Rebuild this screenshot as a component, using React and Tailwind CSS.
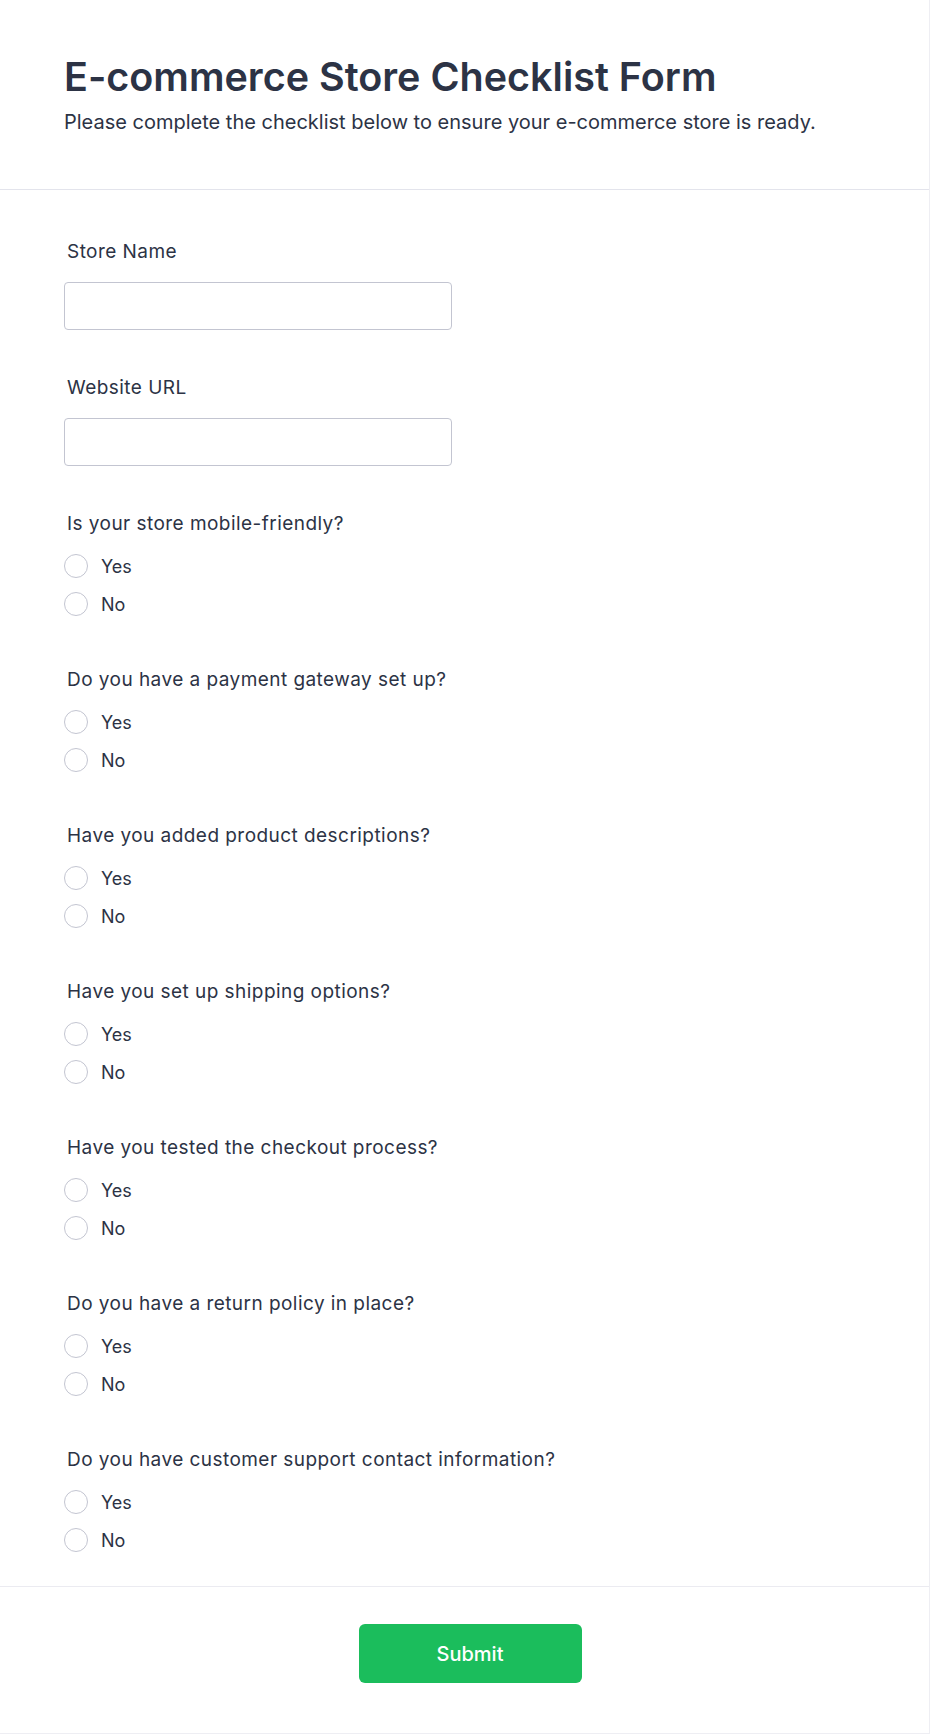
const questions = [
  "Is your store mobile-friendly?",
  "Do you have a payment gateway set up?",
  "Have you added product descriptions?",
  "Have you set up shipping options?",
  "Have you tested the checkout process?",
  "Do you have a return policy in place?",
  "Do you have customer support contact information?",
]

function TextField({ label }) {
  return (
    <div className="mb-[46px]">
      <label className="block pl-[3px] text-[19px] leading-6 tracking-[0.45px] text-[#2c3345]">{label}</label>
      <input
        type="text"
        className="mt-[18px] block w-[388px] h-12 rounded border border-[#c3c5d1] bg-white px-3 text-[16px] outline-none"
      />
    </div>
  )
}

function Question({ text, name, last }) {
  return (
    <div className={last ? "pb-[34px]" : "pb-[52px]"}>
      <p className="pl-[3px] text-[19px] leading-6 tracking-[0.45px] text-[#2c3345]">{text}</p>
      <div className="mt-[18px] flex flex-col gap-[14px]">
        {["Yes", "No"].map(opt => (
          <label key={opt} className="flex h-6 items-center gap-[13px] cursor-pointer">
            <span className="h-6 w-6 rounded-full border-[1.5px] border-[#c3c5d1] bg-white" />
            <input type="radio" name={name} className="hidden" />
            <span className="text-[18px] text-[#2c3345]">{opt}</span>
          </label>
        ))}
      </div>
    </div>
  )
}

export default function App() {
  return (
    <div className="min-h-[1734px] w-full bg-white border-r border-b border-[#eeeef3] font-['Inter','Liberation_Sans',sans-serif]">

      {/* Header */}
      <div className="border-b border-[#e3e4ec] px-16 pt-[54px] pb-[53px]">
        <h1 className="text-[39.5px] leading-[47px] font-semibold text-[#2c3345]">E-commerce Store Checklist Form</h1>
        <p className="mt-[7px] text-[20px] leading-[28px] text-[#2c3345]">
          Please complete the checklist below to ensure your e-commerce store is ready.
        </p>
      </div>

      {/* Fields */}
      <div className="px-16 pt-[50px]">
        <TextField label="Store Name" />
        <TextField label="Website URL" />
        {questions.map((q, i) => (
          <Question key={q} text={q} name={"q" + i} last={i === questions.length - 1} />
        ))}
      </div>

      {/* Footer */}
      <div className="border-t border-[#ebebf1] pt-[37px] pb-[50px] flex justify-center pl-[11px]">
        <button className="w-[223px] h-[59px] rounded-md bg-[#1bbd5c] text-[20px] font-medium text-white cursor-pointer">
          Submit
        </button>
      </div>

    </div>
  )
}
